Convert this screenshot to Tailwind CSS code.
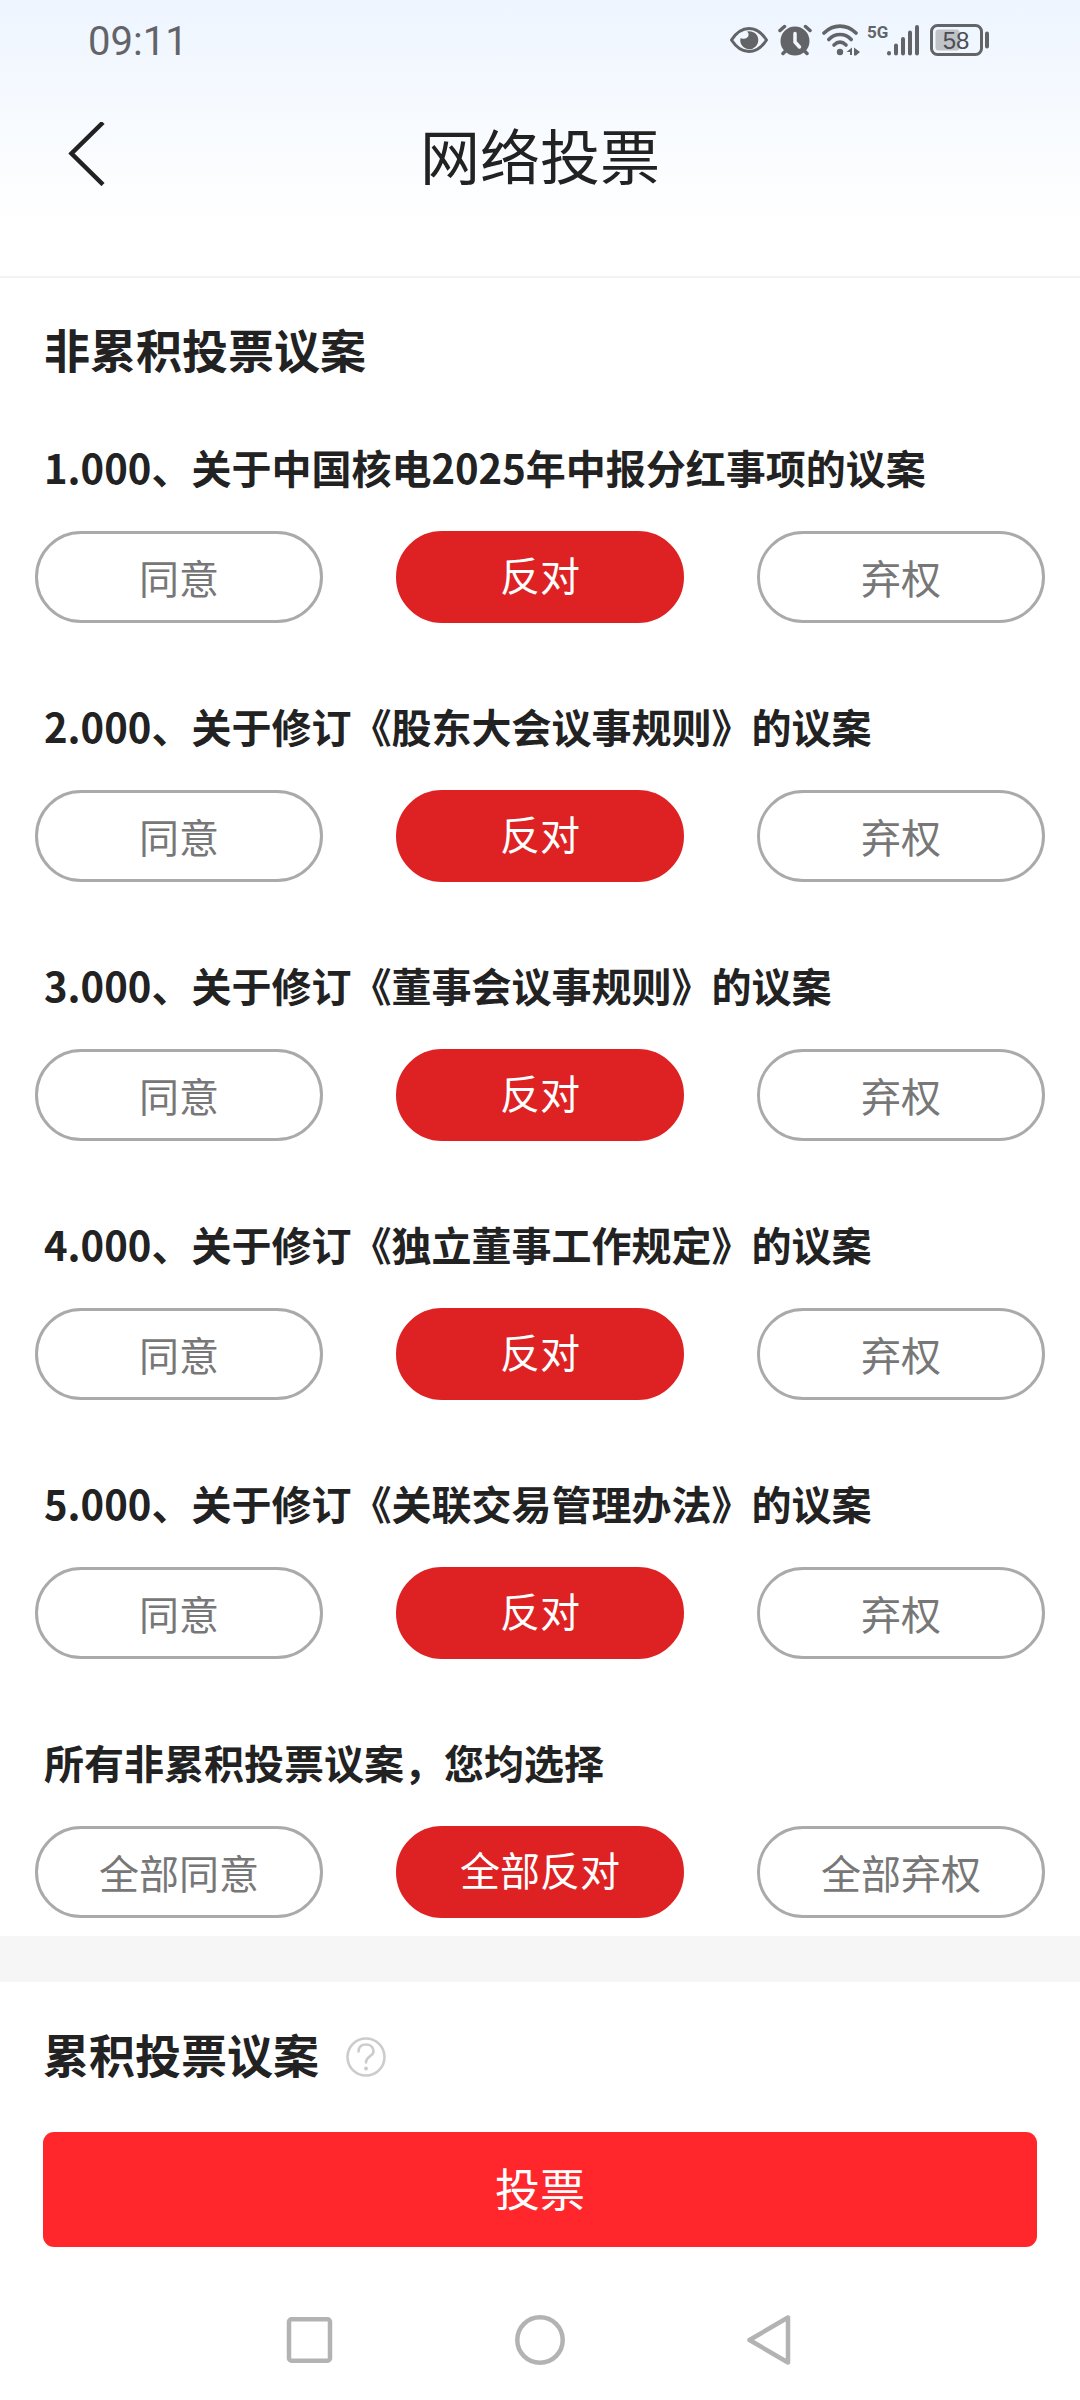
<!DOCTYPE html>
<html lang="zh-CN">
<head>
<meta charset="utf-8">
<meta name="viewport" content="width=device-width, initial-scale=1">
<title>网络投票</title>
<script src="https://cdn.jsdelivr.net/npm/@tailwindcss/browser@4"></script>
</head>
<body class="flex min-h-screen flex-col bg-white font-['Noto_Sans_CJK_SC',sans-serif] text-[#222222]">

<header class="border-b-2 border-[#f3f3f3] bg-linear-to-b from-[#eef5ff] to-white to-[225px] pb-12">
  <!-- Status bar -->
  <div class="flex h-20 items-center justify-between pr-[91px] pl-[88px] text-[#626468]">
    <time class="pt-1 font-['Roboto',sans-serif] text-[40px] leading-none">09:11</time>
    <div class="flex items-center gap-[10px]">
      <svg class="h-8 w-[38px]" viewBox="0 0 38 32" fill="none" aria-hidden="true">
        <path d="M1.500 16C6 9 12 4.500 19 4.500S32 9 36.500 16C32 23 26 27.500 19 27.500S6 23 1.500 16Z" stroke="currentColor" stroke-width="3" stroke-linejoin="round"/>
        <path d="M17 7.500C20 10 18.500 14 15 14.500C13 15 11.500 14.500 10.500 14.200A9 9 0 1 0 17 7.500Z" fill="currentColor"/>
      </svg>
      <svg class="h-8 w-[34px]" viewBox="0 0 34 32" fill="none" stroke="currentColor" stroke-linecap="round" aria-hidden="true">
        <circle cx="17" cy="17" r="14.500" fill="currentColor" stroke="none"/>
        <path d="M2 6.500 6.500 2.500M32 6.500 27.500 2.500M5 29.500l3-3M29 29.500l-3-3" stroke-width="3.500"/>
        <path d="M17 9.500v8.500l4.500 5" stroke="#f1f6ff" stroke-width="3.500"/>
      </svg>
      <svg class="h-8 w-[38px]" viewBox="0 0 38 32" fill="none" stroke="currentColor" stroke-linecap="round" aria-hidden="true">
        <path d="M2 9C11.500-.2 24.500-.2 34 9" stroke-width="3.600"/>
        <path d="M6.800 15.500c6.500-6.600 16-6.600 22.400 0" stroke-width="3.600"/>
        <path d="M12 21c3.800-3.600 8.200-3.600 12 0" stroke-width="3.600"/>
        <circle cx="18" cy="28" r="3.200" fill="currentColor" stroke="none"/>
        <path d="M24.500 28 30 23.500V31h-2v-3ZM32 23.500 38 28l-4 3.500h-2Z" fill="currentColor" stroke="none"/>
      </svg>
      <svg class="h-8 w-[50px] overflow-visible" viewBox="0 0 50 32" fill="none" stroke="currentColor" stroke-linecap="round" stroke-width="4" aria-label="5G">
        <text x="-3" y="14" fill="currentColor" stroke="none" class="font-['Roboto',sans-serif] text-[17px] font-bold">5G</text>
        <path d="M19 29v.5M26 21.500v8M33 15v14.500M40 8.500v21M47 3v26.500"/>
      </svg>
      <svg class="h-8 w-[59px]" viewBox="0 0 59 32" fill="none" aria-label="58%">
        <rect x="1.500" y="1.500" width="50" height="29" rx="6" stroke="currentColor" stroke-width="3"/>
        <rect x="5.500" y="5.500" width="24" height="21" rx="3" fill="#c0c3c8"/>
        <path d="M57 9.500v13" stroke="currentColor" stroke-width="4" stroke-linecap="round"/>
        <text x="26" y="25" text-anchor="middle" fill="#4c4e52" class="font-['Liberation_Sans',sans-serif] text-[24px]">58</text>
      </svg>
    </div>
  </div>
  <!-- Title bar -->
  <div class="grid h-[148px] grid-cols-[1fr_auto_1fr] items-center px-[60px]">
    <button type="button" aria-label="返回" class="flex size-16 items-center">
      <svg class="h-16 w-[52px]" viewBox="0 0 52 64" fill="none" aria-hidden="true"><path d="M43 .5 11.500 31.500 43 62.500" stroke="#222" stroke-width="4.500"/></svg>
    </button>
    <h1 class="text-[60px] leading-[84px]">网络投票</h1>
  </div>
</header>

<main>
  <section class="px-[35px] pt-10 pb-[18px]">
    <h2 class="mb-[59px] px-[9px] text-[46px] leading-[60px] font-bold">非累积投票议案</h2>
    <form id="proposals" class="flex flex-col gap-[73px]"></form>
  </section>
  <div class="h-[46px] bg-[#f6f6f6]"></div>
  <section class="px-[43px] pt-[41px]">
    <div class="flex items-center gap-[27px]">
      <h2 class="text-[46px] leading-[60px] font-bold">累积投票议案</h2>
      <button type="button" aria-label="说明" class="mt-2">
        <svg class="size-10" viewBox="0 0 40 40" fill="none" stroke="#cccccc" stroke-linecap="round" aria-hidden="true">
          <circle cx="20" cy="20" r="18.500" stroke-width="2.600"/>
          <path d="M12.500 14.500C12.500 10 15.500 7.500 20 7.500S27.500 10.500 27.500 14.500C27.500 19.500 20 19 20 25.500" stroke-width="2.600"/>
          <circle cx="20" cy="31.500" r="2" fill="#cccccc" stroke="none"/>
        </svg>
      </button>
    </div>
    <button type="submit" form="proposals" class="mt-[49px] block h-[115px] w-full rounded-[11px] bg-[#ff272b] pb-1 text-[45px] text-white">投票</button>
  </section>
</main>

<!-- System navigation -->
<nav class="mx-auto mt-auto grid h-[120px] w-[64%] grid-cols-3 place-items-center text-[#b3b3b3]">
  <button type="button" aria-label="最近任务"><svg class="size-[50px]" viewBox="0 0 50 50" fill="none" stroke="currentColor" stroke-width="4.500"><rect x="4" y="4.300" width="41" height="41.400" rx="2.500"/></svg></button>
  <button type="button" aria-label="主屏幕"><svg class="size-[50px]" viewBox="0 0 50 50" fill="none" stroke="currentColor" stroke-width="4.500"><circle cx="25" cy="25" r="22.700"/></svg></button>
  <button type="button" aria-label="返回上一级"><svg class="size-[50px]" viewBox="0 0 50 50" fill="none" stroke="currentColor" stroke-width="4.500" stroke-linejoin="round"><path d="M43 2.500v45L4.500 25Z"/></svg></button>
</nav>

<script>
  const proposals = [
    '1.000、关于中国核电2025年中报分红事项的议案',
    '2.000、关于修订《股东大会议事规则》的议案',
    '3.000、关于修订《董事会议事规则》的议案',
    '4.000、关于修订《独立董事工作规定》的议案',
    '5.000、关于修订《关联交易管理办法》的议案',
    '所有非累积投票议案，您均选择',
  ];
  const form = document.getElementById('proposals');
  form.innerHTML = proposals.map((title, i) => {
    const prefix = i === proposals.length - 1 ? '全部' : '';
    const options = ['同意', '反对', '弃权'].map((name) => `
      <label class="relative flex h-[92px] items-center justify-center rounded-full border-3 border-[#aaaaaa] text-[40px] leading-[60px] text-[#777777] has-checked:border-[#de2223] has-checked:bg-[#de2223] has-checked:pb-[6px] has-checked:text-white">
        <input type="radio" name="vote-${i}" value="${name}" class="sr-only"${name === '反对' ? ' checked' : ''}>${prefix}${name}
      </label>`).join('');
    return `
      <div role="radiogroup" aria-labelledby="title-${i}">
        <h3 id="title-${i}" class="mb-[34px] px-[9px] text-[40px] leading-[60px] font-bold">${title}</h3>
        <div class="grid grid-cols-3 gap-[73px]">${options}</div>
      </div>`;
  }).join('');
</script>
</body>
</html>
